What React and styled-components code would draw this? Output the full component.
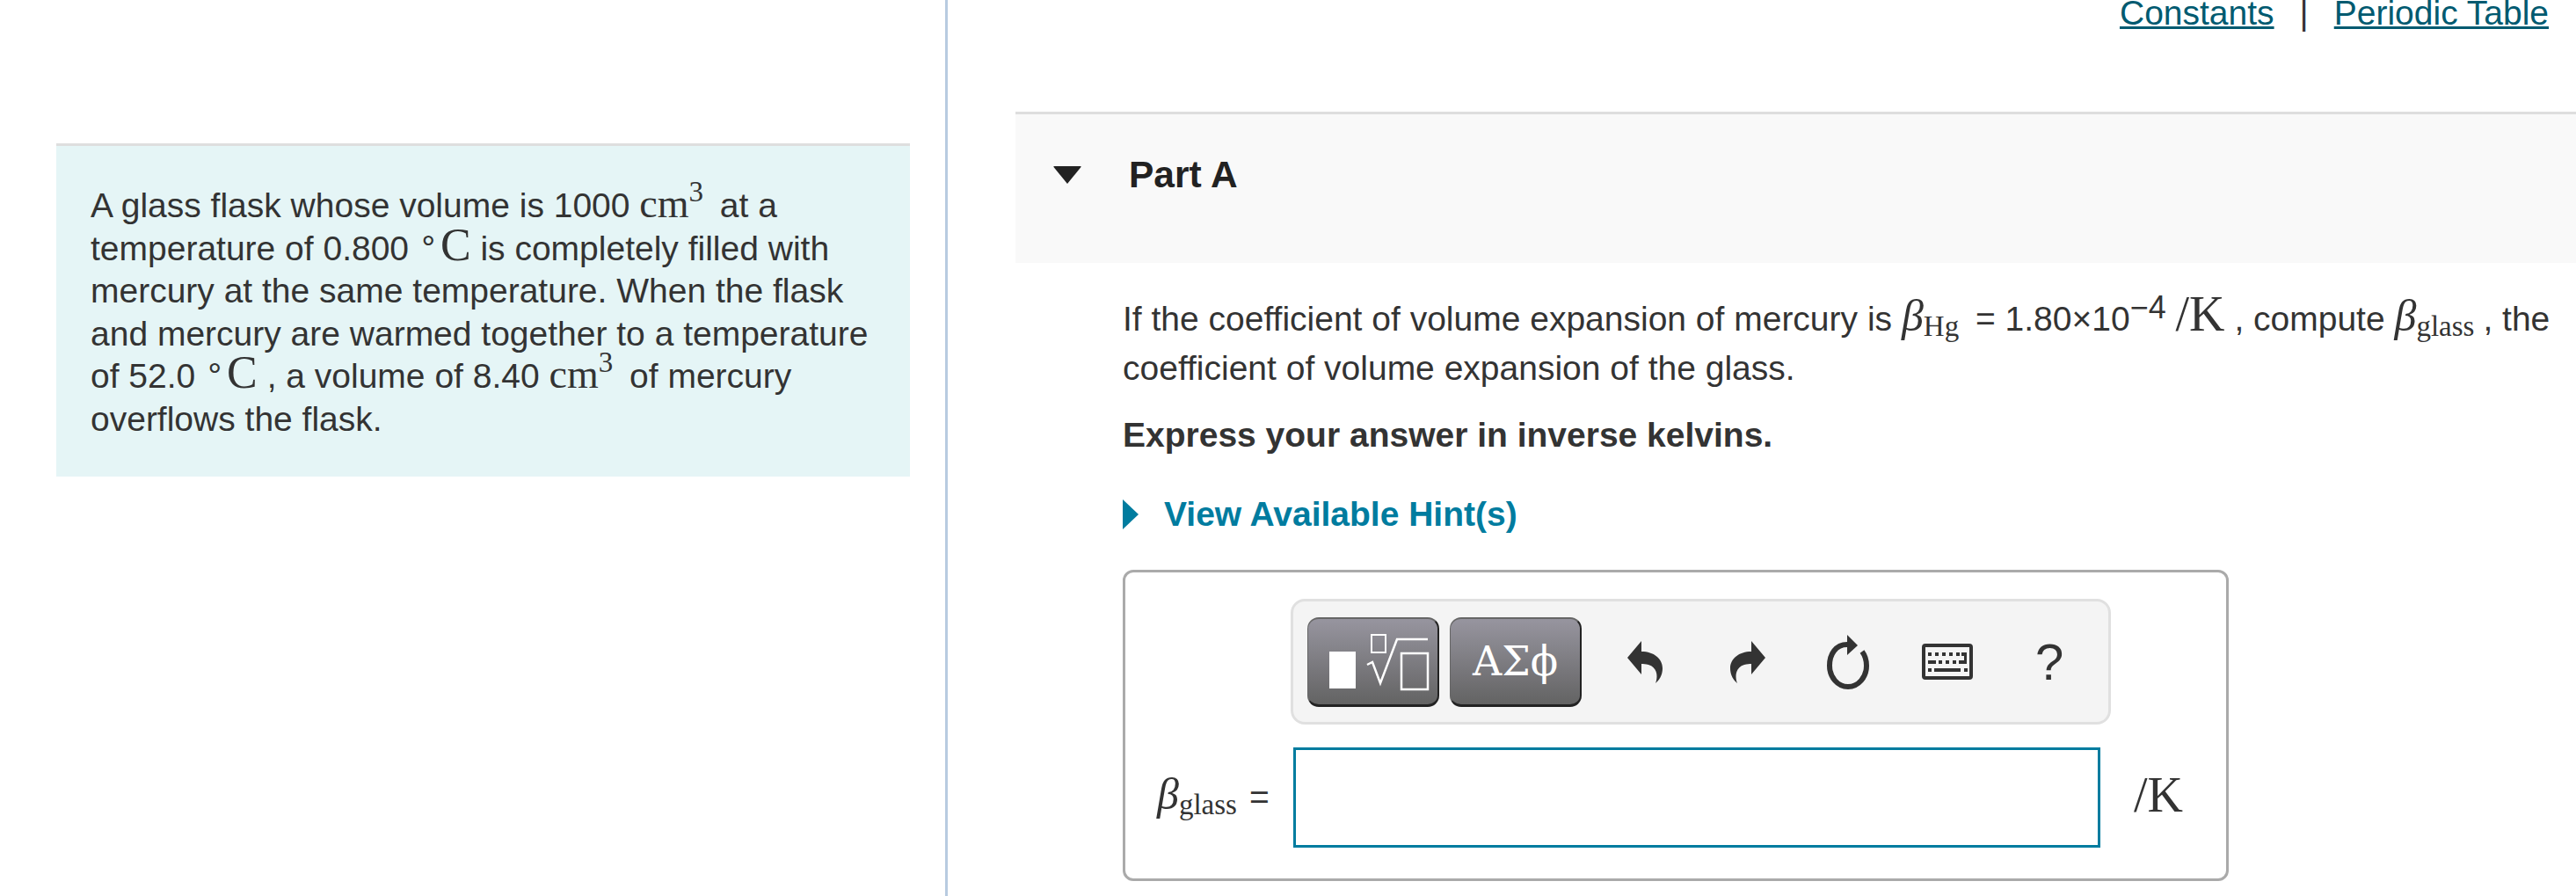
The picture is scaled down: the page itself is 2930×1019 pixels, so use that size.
import styled, { createGlobalStyle } from 'styled-components'

const Global = createGlobalStyle`
  html, body { margin: 0; padding: 0; background: #fff; }
  body { font-family: "Liberation Sans", Arial, sans-serif; color: #333; overflow: hidden; }
`
const Page = styled.div`
  display: flex;
  width: 2930px;
  height: 1019px;
  overflow: hidden;
`
const LeftColumn = styled.div`
  width: 1078px;
  flex: none;
  box-sizing: border-box;
  padding: 163px 40px 0 64px;
  border-right: 3px solid #b8cbe0;
`
const Intro = styled.div`
  box-sizing: border-box;
  height: 379px;
  background: #e5f5f6;
  border-top: 3px solid #dedede;
  padding: 44px 30px 0 39px;
  font-size: 39px;
  line-height: 48.6px;
`
const RightColumn = styled.div`
  flex: 1;
  min-width: 0;
  padding-left: 77px;
`
const TopLinks = styled.div`
  height: 37px;
  overflow: hidden;
  display: flex;
  justify-content: flex-end;
  align-items: flex-end;
  padding-right: 31px;
  font-size: 39px;
  line-height: 44px;
`
const TopLink = styled.a`
  color: #005a70;
  text-decoration: underline;
`
const Sep = styled.span`
  margin: 0 29px;
  color: #333;
`
const PartHeader = styled.div`
  box-sizing: border-box;
  height: 172px;
  margin-top: 90px;
  background: #f9f9f9;
  border-top: 3px solid #dedede;
  display: flex;
  align-items: center;
  padding: 0 0 31px 43px;
`
const PartTitle = styled.h2`
  margin: 0 0 0 54px;
  font-size: 42.5px;
  font-weight: bold;
  color: #222;
  line-height: 48px;
`
const Body = styled.div`
  padding: 36px 31px 0 122px;
`
const Para = styled.p`
  margin: 0;
  font-size: 39px;
  line-height: 56px;
  white-space: nowrap;
`
const Strong = styled.p`
  margin: 24px 0 0;
  font-size: 39px;
  line-height: 48px;
  font-weight: bold;
`
const HintRow = styled.div`
  display: flex;
  align-items: center;
  margin-top: 42px;
  height: 48px;
  color: #007c9f;
  font-size: 39px;
  font-weight: bold;
  gap: 29px;
`
const M = styled.span`
  font-family: "Liberation Serif", "Times New Roman", serif;
  font-size: ${p => p.$size || 46}px;
  line-height: 0;
`
const Beta = styled.span`
  font-family: "Liberation Serif", "Times New Roman", serif;
  font-style: italic;
  font-size: ${p => p.$size || 50}px;
  line-height: 0;
`
const Sub = styled.sub`
  font-family: "Liberation Serif", "Times New Roman", serif;
  font-size: 33px;
  line-height: 0;
  vertical-align: -6px;
  margin-right: ${p => p.$after || 0}px;
`
const Sup = styled.sup`
  font-family: ${p => (p.$sans ? '"Liberation Sans", sans-serif' : '"Liberation Serif", serif')};
  font-size: ${p => p.$size || 33}px;
  line-height: 0;
  vertical-align: ${p => p.$lift || 18}px;
  margin-right: ${p => p.$after || 0}px;
`
const AnswerBox = styled.div`
  box-sizing: border-box;
  width: 1258px;
  height: 354px;
  margin-top: 39px;
  border: 3px solid #aaa;
  border-radius: 12px;
  padding: 30px 0 0 36px;
`
const ToolbarRow = styled.div`
  display: flex;
  justify-content: flex-start;
  padding-left: 152px;
`
const Toolbar = styled.div`
  box-sizing: border-box;
  width: 933px;
  height: 143px;
  display: flex;
  align-items: center;
  background: #f4f4f4;
  border: 3px solid #e0e0e0;
  border-radius: 16px;
  padding: 0 0 0 16px;
`
const TemplateButton = styled.div`
  box-sizing: border-box;
  width: ${p => p.$w}px;
  height: 102px;
  margin-right: 12px;
  display: flex;
  align-items: center;
  justify-content: center;
  border-radius: 13px;
  background: linear-gradient(#97959f, #636363);
  border-top: 2px solid #666;
  border-left: 1px solid #666;
  border-right: 2px solid #222;
  border-bottom: 3px solid #222;
  color: #fff;
  font-family: "DejaVu Serif", "Liberation Serif", serif;
  font-size: 46px;
`
const ToolIcon = styled.div`
  width: ${p => p.$w}px;
  margin-left: ${p => p.$gap}px;
  flex: none;
  display: flex;
  justify-content: center;
  color: #333;
  line-height: 1;
`
const Help = styled.span`
  font-size: 58px;
  line-height: 1;
  color: #333;
`
const AnswerRow = styled.div`
  display: flex;
  align-items: center;
  margin-top: 26px;
`
const Label = styled.div`
  width: 155px;
  flex: none;
  box-sizing: border-box;
  white-space: nowrap;
  font-size: 39px;
`
const AnswerInput = styled.div`
  box-sizing: border-box;
  width: 918px;
  height: 114px;
  border: 3px solid #007c9f;
  background: #fff;
`
const Unit = styled.div`
  margin-left: 38px;
  margin-top: -6px;
  font-family: "Liberation Serif", serif;
  font-size: 56px;
`

const Undo = ({ flip }) => (
  <svg width="40" height="48" viewBox="0 0 40 48" style={flip ? { transform: 'scaleX(-1)' } : undefined}>
    <path fill="currentColor" d="M0 19 L16 0 V12 C30 12 40 20 40 31 C40 38 37 44 32 48 C35 40 34 30 24 27 C21 26 18 26 16 26 V38 Z" />
  </svg>
)

const Restart = () => (
  <svg width="48" height="62" viewBox="0 0 48 62">
    <path fill="none" stroke="currentColor" strokeWidth="6" d="M23 11 C10 11 3 22 3 35 C3 48 12 59 24 59 C36 59 45 48 45 35 C45 28 43 23 40 19" />
    <path fill="currentColor" d="M23 0 L35 12 L23 23 Z" />
  </svg>
)

const keyDots = [
  [7, 10], [15, 10], [23, 10], [31, 10], [39, 10], [45, 10],
  [19, 19], [27, 19], [35, 19],
  [7, 28], [48, 28],
]

const Keyboard = () => (
  <svg width="58" height="41" viewBox="0 0 58 41">
    <rect x="2" y="2" width="54" height="37" rx="2" fill="none" stroke="currentColor" strokeWidth="4" />
    {keyDots.map(([x, y]) => (
      <rect key={x + '-' + y} x={x} y={y} width="4" height="4" fill="currentColor" />
    ))}
    <rect x="7" y="19" width="9" height="4" fill="currentColor" />
    <rect x="14" y="28" width="30" height="4" fill="currentColor" />
    <path fill="currentColor" d="M42 19 H48 V10 H51 V23 H42 Z" />
  </svg>
)

const TemplatesIcon = () => (
  <svg width="146" height="97" viewBox="0 0 146 97">
    <rect x="23" y="37" width="30" height="42" fill="#fff" />
    <rect x="71" y="18" width="16" height="20" fill="none" stroke="#fff" strokeWidth="2" />
    <path fill="none" stroke="#fff" strokeWidth="2.5" d="M66 52 L72 49 L81 73 L100 23 H135" />
    <rect x="105" y="39" width="30" height="41" fill="none" stroke="#fff" strokeWidth="2.5" />
  </svg>
)

export default function App() {
  return (
    <Page>
      <Global />
      <LeftColumn>
        <Intro>
          A glass flask whose volume is 1000 <M>cm</M><Sup $after={8}>3</Sup> at a temperature of 0.800 <Sup $lift={12} $size={36} $after={2}>∘</Sup><M $size={52}>C</M> is
          completely filled with mercury at the same temperature. When the flask and mercury are warmed together to a
          temperature of 52.0 <Sup $lift={12} $size={36} $after={2}>∘</Sup><M $size={52}>C</M> , a volume of 8.40 <M>cm</M><Sup $after={8}>3</Sup> of mercury overflows the flask.
        </Intro>
      </LeftColumn>
      <RightColumn>
        <TopLinks>
          <TopLink>Constants</TopLink>
          <Sep>|</Sep>
          <TopLink>Periodic Table</TopLink>
        </TopLinks>
        <PartHeader>
          <svg width="32" height="20" viewBox="0 0 32 20">
            <path fill="#222" d="M1 0 H31 Q32 0 31.5 1 L16 20 L0.5 1 Q0 0 1 0 Z" />
          </svg>
          <PartTitle>Part A</PartTitle>
        </PartHeader>
        <Body>
          <Para>
            If the coefficient of volume expansion of mercury is <Beta>β</Beta><Sub $after={8}>Hg</Sub> = 1.80×10<Sup $sans $size={36} $lift={14}>−4</Sup> <M $size={56}>/K</M> , compute <Beta>β</Beta><Sub $after={10}>glass</Sub>, the
            <br />
            coefficient of volume expansion of the glass.
          </Para>
          <Strong>Express your answer in inverse kelvins.</Strong>
          <HintRow>
            <svg width="18" height="34" viewBox="0 0 18 34">
              <path fill="#007c9f" d="M0 0 L18 17 L0 34 Z" />
            </svg>
            View Available Hint(s)
          </HintRow>
          <AnswerBox>
            <ToolbarRow>
              <Toolbar>
                <TemplateButton $w={150}><TemplatesIcon /></TemplateButton>
                <TemplateButton $w={150}>ΑΣϕ</TemplateButton>
                <ToolIcon $w={40} $gap={40}><Undo /></ToolIcon>
                <ToolIcon $w={40} $gap={77}><Undo flip /></ToolIcon>
                <ToolIcon $w={48} $gap={70}><Restart /></ToolIcon>
                <ToolIcon $w={58} $gap={60}><Keyboard /></ToolIcon>
                <ToolIcon $w={32} $gap={71}><Help>?</Help></ToolIcon>
              </Toolbar>
            </ToolbarRow>
            <AnswerRow>
              <Label><Beta>β</Beta><Sub $after={14}>glass</Sub>=</Label>
              <AnswerInput />
              <Unit>/K</Unit>
            </AnswerRow>
          </AnswerBox>
        </Body>
      </RightColumn>
    </Page>
  )
}
